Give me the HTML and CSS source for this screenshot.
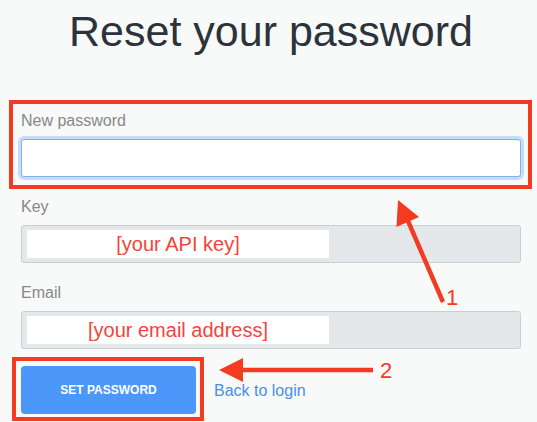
FILE: index.html
```html
<!DOCTYPE html>
<html lang="en">
<head>
<meta charset="utf-8">
<title>Reset your password</title>
<link rel="stylesheet" href="styles.css">
</head>
<body>
<div class="page">
  <h1 class="title">Reset your password</h1>
  <form class="form">
    <div class="field">
      <label class="label">New password</label>
      <input class="input input-focus" type="password">
    </div>
    <div class="field">
      <label class="label">Key</label>
      <div class="input input-disabled"><span class="redact">[your API key]</span></div>
    </div>
    <div class="field">
      <label class="label">Email</label>
      <div class="input input-disabled"><span class="redact">[your email address]</span></div>
    </div>
    <div class="actions">
      <button class="btn" type="button">SET PASSWORD</button>
      <a class="link" href="#">Back to login</a>
    </div>
  </form>
  <div class="mark mark-1"></div>
  <div class="mark mark-2"></div>
  <svg class="arrows" width="537" height="422" viewBox="0 0 537 422">
    <line x1="408" y1="221" x2="443" y2="302" class="shaft"/>
    <polygon points="398,200 396.5,227 419,217" class="head"/>
    <text x="446" y="305" class="num">1</text>
    <line x1="240" y1="370" x2="373" y2="370" class="shaft"/>
    <polygon points="219,370 243,358 243,382" class="head"/>
    <text x="380" y="378" class="num">2</text>
  </svg>
</div>
</body>
</html>
```

FILE: styles.css
```css
* { box-sizing: border-box; }
html, body {
  margin: 0;
  padding: 0;
  background: #f8f9f9;
  font-family: "Liberation Sans", Arial, sans-serif;
}
.page {
  position: relative;
  width: 537px;
  height: 422px;
  padding-left: 21px;
  overflow: hidden;
}
.title {
  width: 500px;
  margin: 0;
  padding-top: 6px;
  font-size: 43px;
  line-height: 50px;
  font-weight: normal;
  text-align: center;
  color: #2c333a;
}
.form {
  width: 500px;
  margin-top: 55px;
  display: flex;
  flex-direction: column;
  gap: 20px;
}
.field {
  display: flex;
  flex-direction: column;
}
.label {
  display: block;
  font-size: 16px;
  line-height: 20px;
  color: #878889;
  margin-bottom: 8px;
}
.input {
  display: block;
  width: 500px;
  height: 38px;
  border-radius: 3px;
  margin: 0;
  font: inherit;
}
.input-focus {
  background: #ffffff;
  border: 1px solid #7fb0f4;
  box-shadow: 0 0 0 3px #c6dcfb;
  outline: none;
}
.input-disabled {
  background: #e5e8eb;
  border: 1px solid #cacfd4;
  display: flex;
  align-items: center;
  padding-left: 5px;
}
.redact {
  display: flex;
  align-items: center;
  justify-content: center;
  width: 302px;
  height: 28px;
  background: #ffffff;
  color: #f1453a;
  font-size: 20px;
}
.actions {
  display: flex;
  align-items: center;
  gap: 18px;
  margin-top: -3px;
}
.btn {
  width: 175px;
  height: 48px;
  border: none;
  border-radius: 4px;
  background: #4c97fa;
  color: #ffffff;
  font-family: "Liberation Sans", Arial, sans-serif;
  font-size: 12px;
  font-weight: bold;
  padding: 0;
}
.link {
  font-size: 16px;
  line-height: 18px;
  padding-top: 2px;
  color: #4a8fe6;
  text-decoration: none;
}
.mark {
  position: absolute;
  border: 4px solid #f43b22;
}
.mark-1 {
  left: 9px;
  top: 100px;
  width: 523px;
  height: 89px;
}
.mark-2 {
  left: 12px;
  top: 357px;
  width: 192px;
  height: 64px;
}
.arrows {
  position: absolute;
  left: 0;
  top: 0;
  pointer-events: none;
}
.shaft {
  stroke: #f43b22;
  stroke-width: 4.5;
}
.head {
  fill: #f43b22;
}
.num {
  fill: #f43b22;
  font-family: "Liberation Sans", Arial, sans-serif;
  font-size: 22px;
}
```
